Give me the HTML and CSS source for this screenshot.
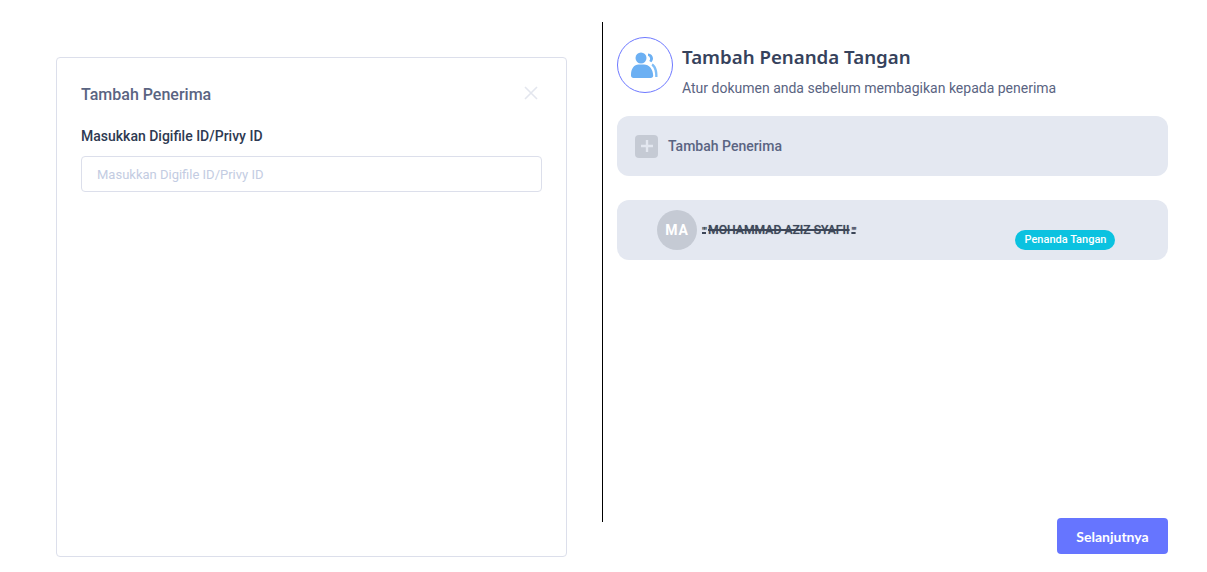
FILE: index.html
```html
<!DOCTYPE html>
<html lang="id">
<head>
<meta charset="utf-8">
<title>Tambah Penanda Tangan</title>
<link rel="stylesheet" href="styles.css">
</head>
<body>
<main class="page">
  <section class="panel">
    <div class="panel-head">
      <h2 class="panel-title">Tambah Penerima</h2>
      <svg class="close" width="14" height="14" viewBox="0 0 14 14" aria-hidden="true"><path d="M1 1l12 12M13 1L1 13" stroke="#e3e6ee" stroke-width="1.6" fill="none"/></svg>
    </div>
    <label class="field-label" for="pid">Masukkan Digifile ID/Privy ID</label>
    <input class="field" id="pid" type="text" placeholder="Masukkan Digifile ID/Privy ID">
  </section>
  <div class="divider"></div>
  <section class="content">
    <header class="head">
      <div class="head-icon">
        <svg width="28" height="28" viewBox="0 0 28 28" aria-hidden="true">
          <circle cx="10" cy="7" r="5.500" fill="#6cb0f3"/>
          <path d="M0 24.500C-.2 18 3 13.500 7.500 13.500h5.500c5 0 9 4.500 9.200 11 0 1.500-1 2.500-2.500 2.500H2.500C1 27 0 26 0 24.500z" fill="#6cb0f3"/>
          <path d="M17 2.500c3 .2 5 2.400 5 5 0 1.500-.7 2.800-1.700 3.800l-2-1.300c1.500-1.800 1-4.200-1.300-5.300z" fill="#6cb0f3"/>
          <path d="M21.500 12.500c3.500 2 5.300 6.500 5 13.500h-2.300c.1-5-.8-9.200-3.700-11.500z" fill="#7fbdf6"/>
        </svg>
      </div>
      <div class="head-text">
        <h1 class="title">Tambah Penanda Tangan</h1>
        <p class="subtitle">Atur dokumen anda sebelum membagikan kepada penerima</p>
      </div>
    </header>
    <button class="add-row" type="button">
      <span class="add-icon">
        <svg width="14" height="14" viewBox="0 0 14 14" aria-hidden="true"><path d="M7 1v12M1 7h12" stroke="#e3e7f0" stroke-width="2.400" fill="none"/></svg>
      </span>
      <span class="add-label">Tambah Penerima</span>
    </button>
    <div class="person">
      <span class="avatar">MA</span>
      <span class="name"><span class="ticks">""</span>MOHAMMAD AZIZ SYAFII<span class="ticks">""</span></span>
      <span class="badge">Penanda Tangan</span>
    </div>
    <div class="actions">
      <button class="next" type="button">Selanjutnya</button>
    </div>
  </section>
</main>
</body>
</html>
```
FILE: styles.css
```css
* { box-sizing: border-box; }
html, body { margin: 0; height: 100%; background: #fff; overflow: hidden; }
body { font-family: Roboto, "Liberation Sans", sans-serif; }
.page { display: flex; align-items: flex-start; height: 572px; padding: 22px 39px 0 56px; }
.panel { width: 511px; height: 500px; margin-top: 35px; flex: none; border: 1px solid #dcdfeb; border-radius: 4px; padding: 24px 24px 0; }
.panel-head { display: flex; justify-content: space-between; align-items: center; height: 26px; margin-bottom: 18px; padding-right: 4px; }
.panel-title { margin: 0; font-size: 16px; line-height: 26px; font-weight: 500; color: #5a6482; }
.close { display: block; margin-top: -4px; }
.field-label { display: block; font-size: 14px; line-height: 20px; font-weight: 500; color: #2e3a52; margin-bottom: 10px; }
.field { display: block; width: 461px; height: 36px; border: 1px solid #dcdfeb; border-radius: 4px; padding: 0 15px; font: 400 13px Roboto, sans-serif; color: #2e3a52; outline: none; }
.field::placeholder { color: #c3cce2; opacity: 1; }
.divider { width: 1px; height: 500px; background: #000; margin-left: 35px; flex: none; }
.content { width: 551px; margin-left: 14px; flex: none; height: 532px; display: flex; flex-direction: column; }
.head { display: flex; align-items: flex-start; gap: 9px; height: 56px; margin: 15px 0 23px; }
.head-icon { width: 56px; height: 56px; flex: none; border: 1.3px solid #6e79ff; border-radius: 50%; display: flex; align-items: center; justify-content: center; }
.head-text { display: flex; flex-direction: column; padding-top: 7px; }
.title { margin: 0 0 8px; font-family: "Noto Sans", sans-serif; font-size: 18.7px; line-height: 26px; font-weight: 600; color: #36425c; }
.subtitle { margin: 0; font-size: 14px; line-height: 20px; color: #5a6482; }
.add-row { display: flex; align-items: center; gap: 10px; width: 100%; height: 60px; padding: 0 18px; background: #e4e8f1; border: 0; border-radius: 12px; text-align: left; font: inherit; }
.add-icon { width: 23px; height: 23px; border-radius: 4px; background: #c5cad4; display: flex; align-items: center; justify-content: center; }
.add-label { font-size: 14px; font-weight: 500; color: #5a6482; }
.person { display: flex; align-items: center; height: 60px; margin-top: 24px; padding-left: 40px; background: #e4e8f1; border-radius: 12px; }
.avatar { width: 40px; height: 40px; flex: none; border-radius: 50%; background: #c5cad4; color: #fff; font-size: 14px; font-weight: 700; letter-spacing: .8px; display: flex; align-items: center; justify-content: center; }
.name { font-size: 12.2px; line-height: 16px; font-weight: 500; color: #3c4658; text-decoration: line-through; text-decoration-thickness: 2px; margin-left: 3px; white-space: nowrap; text-shadow: 0 0 1px rgba(60, 70, 88, .5); }
.ticks { letter-spacing: -1px; margin: 0 2px; vertical-align: -1px; font-size: 10px; line-height: 1; }
.badge { align-self: flex-end; margin: 0 0 10px 158px; height: 20px; width: 100px; border-radius: 10px; background: #0bc2e0; color: #fff; font-size: 11px; font-weight: 500; line-height: 20px; text-align: center; white-space: nowrap; }
.actions { margin-top: auto; display: flex; justify-content: flex-end; }
.next { width: 111px; height: 36px; border: 0; border-radius: 4px; background: #6675ff; color: #fff; font: 700 14px Lato, sans-serif; }
```
